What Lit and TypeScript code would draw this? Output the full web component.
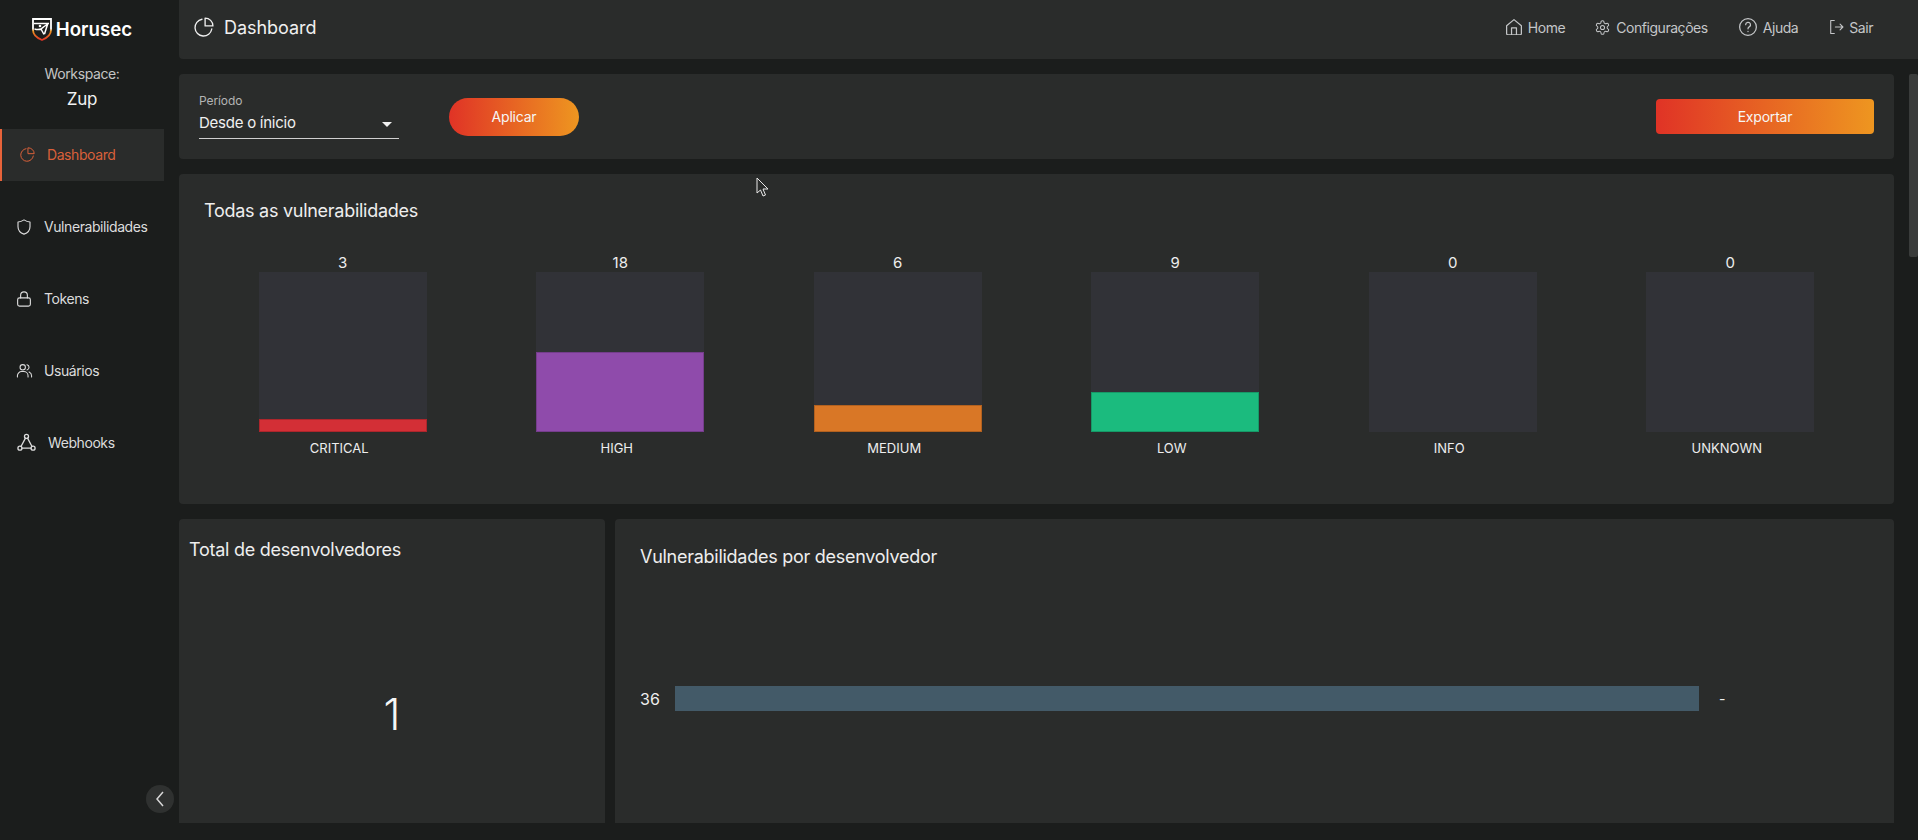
import { LitElement, html, css, svg } from 'lit';
import { customElement } from 'lit/decorators.js';

const icons = {
  pie: svg`<path d="M9.500 3.500A9.500 9.500 0 1 0 20.500 14.500"/><path d="M13 2.200A8.800 8.800 0 0 1 21.800 11H13z"/>`,
  shield: svg`<path d="M12 2.500c2.600 1.700 5.200 2.600 8 2.800v6.200c0 4.800-3.200 8.200-8 10-4.800-1.800-8-5.200-8-10V5.300c2.800-.2 5.400-1.100 8-2.800z"/>`,
  lock: svg`<rect x="3.500" y="10.500" width="17" height="11" rx="2.500"/><path d="M7.500 10.500V7a4.500 4.500 0 0 1 9 0v3.500"/>`,
  users: svg`<circle cx="9.500" cy="7.500" r="3.800"/><path d="M2 21v-1.500a6 6 0 0 1 6-6h3a6 6 0 0 1 6 6V21"/><path d="M15.500 3.800a3.800 3.800 0 0 1 0 7.400M18.500 14a6 6 0 0 1 3.500 5.500V21"/>`,
  webhook: svg`<circle cx="12" cy="5" r="2.300"/><circle cx="4.500" cy="18.500" r="2.300"/><circle cx="19.500" cy="18.500" r="2.300"/><path d="M10.800 7 5.700 16.500M13.200 7l5.100 9.500M6.800 18.500h10.400"/>`,
  home: svg`<path d="M3 10.500 12 3l9 7.500V20a1.500 1.500 0 0 1-1.500 1.500h-15A1.500 1.500 0 0 1 3 20z"/><path d="M9 21.500V13h6v8.500"/>`,
  gear: svg`<circle cx="12" cy="12" r="3"/><path d="M12.220 2h-.44a2 2 0 0 0-2 2v.18a2 2 0 0 1-1 1.730l-.43.25a2 2 0 0 1-2 0l-.15-.08a2 2 0 0 0-2.730.73l-.22.38a2 2 0 0 0 .73 2.730l.15.1a2 2 0 0 1 1 1.720v.51a2 2 0 0 1-1 1.740l-.15.09a2 2 0 0 0-.73 2.730l.22.38a2 2 0 0 0 2.730.73l.15-.08a2 2 0 0 1 2 0l.43.25a2 2 0 0 1 1 1.730V20a2 2 0 0 0 2 2h.44a2 2 0 0 0 2-2v-.18a2 2 0 0 1 1-1.730l.43-.25a2 2 0 0 1 2 0l.15.08a2 2 0 0 0 2.730-.73l.22-.39a2 2 0 0 0-.73-2.730l-.15-.08a2 2 0 0 1-1-1.740v-.5a2 2 0 0 1 1-1.740l.15-.09a2 2 0 0 0 .73-2.730l-.22-.38a2 2 0 0 0-2.730-.73l-.15.08a2 2 0 0 1-2 0l-.43-.25a2 2 0 0 1-1-1.730V4a2 2 0 0 0-2-2z"/>`,
  help: svg`<circle cx="12" cy="12" r="10"/><path d="M9.200 9.300a2.900 2.900 0 1 1 4.300 2.500c-1 .6-1.500 1.100-1.500 2.400"/><path d="M12 17.200v.3"/>`,
  exit: svg`<path d="M9 3H4v18h5"/><path d="M10.500 12H21M17 8l4 4-4 4"/>`,
};

type IconName = keyof typeof icons;

const icon = (name: IconName, size: number, box = '0 0 24 24') =>
  html`<svg class="icon" width=${size} height=${size} viewBox=${box}>${icons[name]}</svg>`;

const PIE_BOX = '0.500 1 22.500 22.500';

const severities = [
  { label: 'CRITICAL', value: 3, color: '#d32f36' },
  { label: 'HIGH', value: 18, color: '#8f4bab' },
  { label: 'MEDIUM', value: 6, color: '#d97726' },
  { label: 'LOW', value: 9, color: '#1bbb7e' },
  { label: 'INFO', value: 0, color: '#1bbb7e' },
  { label: 'UNKNOWN', value: 0, color: '#1bbb7e' },
];

const navItems: { label: string; icon: IconName; size: number; box?: string; active?: boolean; wide?: boolean }[] = [
  { label: 'Dashboard', icon: 'pie', size: 15, box: PIE_BOX, active: true },
  { label: 'Vulnerabilidades', icon: 'shield', size: 18 },
  { label: 'Tokens', icon: 'lock', size: 18 },
  { label: 'Usuários', icon: 'users', size: 17 },
  { label: 'Webhooks', icon: 'webhook', size: 21, wide: true },
];

@customElement('app-root')
export class AppRoot extends LitElement {
  static styles = css`
    :host {
      position: relative;
      display: flex;
      height: 840px;
      overflow: hidden;
      background: #1b1d1c;
      color: #f2f2f2;
      font-family: Inter, 'Liberation Sans', sans-serif;
    }

    .icon {
      flex: none;
      fill: none;
      stroke: currentColor;
      stroke-width: 1.5;
      stroke-linecap: round;
      stroke-linejoin: round;
    }

    .sidebar {
      position: relative;
      flex: none;
      width: 164px;
      box-sizing: border-box;
      padding-top: 17px;
    }

    .logo {
      display: flex;
      align-items: center;
      justify-content: center;
      gap: 4px;
      height: 24px;
      font-size: 18.7px;
      font-weight: 600;
      color: #fff;
    }

    .workspace {
      margin-top: 24px;
      text-align: center;
      font-size: 14px;
      letter-spacing: -0.4px;
      line-height: 17px;
      color: #c4c4c4;
    }

    .workspace-name {
      margin-top: 7px;
      text-align: center;
      font-size: 17px;
      letter-spacing: -0.3px;
      line-height: 20px;
      color: #f2f2f2;
    }

    nav {
      margin-top: 20px;
    }

    .nav-item {
      display: flex;
      align-items: center;
      gap: 10px;
      height: 52px;
      margin-bottom: 20px;
      box-sizing: border-box;
      padding: 0 0 1px 14px;
      font-size: 14px;
      letter-spacing: -0.42px;
      color: #dcdcdc;
    }

    .nav-slot {
      flex: none;
      width: 20px;
      display: flex;
      justify-content: center;
    }

    .nav-item.wide .nav-slot {
      width: 24px;
    }

    .nav-item.active {
      padding-left: 15px;
      border-left: 2px solid #e8633a;
      background: #2a2c2b;
      color: #d9603a;
    }

    .collapse {
      position: absolute;
      left: 146px;
      top: 785px;
      width: 28px;
      height: 28px;
      border-radius: 50%;
      background: #2f3130;
      color: #d8d8d8;
      display: flex;
      align-items: center;
      justify-content: center;
    }

    .main {
      flex: 1;
      min-width: 0;
      display: flex;
      flex-direction: column;
      padding-left: 15px;
    }

    header {
      flex: none;
      display: flex;
      align-items: center;
      height: 59px;
      box-sizing: border-box;
      padding: 0 45px 5px 15px;
      margin-bottom: 15px;
      background: #2a2c2b;
      border-radius: 0 0 0 4px;
    }

    .title {
      display: flex;
      align-items: center;
      gap: 10px;
      font-size: 18px;
      letter-spacing: -0.05px;
      color: #f0f0f0;
      margin-right: auto;
    }

    .top-link {
      display: flex;
      align-items: center;
      gap: 6px;
      font-size: 14px;
      letter-spacing: -0.45px;
      color: #c4c6c8;
      margin-left: 31px;
    }

    .top-link.gear {
      margin-left: 30px;
    }

    .top-link.exit {
      gap: 5px;
      margin-left: 32px;
    }

    .content {
      display: flex;
      gap: 15px;
    }

    .column {
      flex: 1;
      min-width: 0;
      display: flex;
      flex-direction: column;
      gap: 15px;
      height: 749px;
    }

    .scrollbar {
      flex: none;
      width: 9px;
      height: 183px;
      background: #3a3c3b;
      border-radius: 2px;
    }

    .card {
      background: #2a2c2b;
      border-radius: 4px;
    }

    .filters {
      flex: none;
      height: 85px;
      box-sizing: border-box;
      display: flex;
      align-items: center;
      padding: 0 20px;
    }

    .select {
      width: 200px;
      box-sizing: border-box;
      border-bottom: 1px solid #d0d0d0;
      height: 45px;
      color: #f0f0f0;
    }

    .select small {
      display: block;
      font-size: 12px;
      letter-spacing: -0.1px;
      line-height: 14px;
      color: #b4b4b4;
    }

    .select-value {
      display: flex;
      align-items: center;
      justify-content: space-between;
      font-size: 15px;
      letter-spacing: -0.25px;
      line-height: 24px;
      margin-top: 3px;
      padding-right: 7px;
    }

    .caret {
      width: 0;
      height: 0;
      border-left: 5px solid transparent;
      border-right: 5px solid transparent;
      border-top: 5px solid #f0f0f0;
      margin-top: 3px;
    }

    .btn {
      display: flex;
      align-items: center;
      justify-content: center;
      font-size: 14px;
      letter-spacing: -0.2px;
      color: #f6f6f6;
      background: linear-gradient(90deg, #e03326, #ee9620);
    }

    .apply {
      width: 130px;
      height: 38px;
      margin-left: 50px;
      border-radius: 19px;
    }

    .export {
      width: 218px;
      height: 35px;
      margin-left: auto;
      border-radius: 4px;
    }

    .vulns {
      flex: none;
      height: 330px;
      box-sizing: border-box;
      padding: 25px 25px 0;
    }

    h2 {
      margin: 0;
      font-size: 18px;
      font-weight: 400;
      letter-spacing: -0.27px;
      line-height: 24px;
      color: #eeeeee;
    }

    .bars {
      display: grid;
      grid-template-columns: repeat(6, 1fr);
      margin-top: 36px;
    }

    .bar-col {
      display: flex;
      flex-direction: column;
      align-items: center;
      color: #eeeeee;
    }

    .bar-value {
      font-size: 15px;
      line-height: 18px;
      height: 18px;
      margin-top: -5px;
    }

    .track {
      width: 168px;
      height: 160px;
      background: #313237;
      display: flex;
      align-items: flex-end;
    }

    .fill {
      width: 100%;
      box-sizing: border-box;
      border: 1px solid rgba(0, 0, 0, 0.18);
    }

    .fill.empty {
      display: none;
    }

    .bar-label {
      margin-top: 7px;
      margin-right: 7px;
      line-height: 18px;
      font-size: 13px;
    }

    .row {
      flex: 1;
      min-height: 0;
      display: flex;
      gap: 10px;
    }

    .row .card {
      border-radius: 4px 4px 0 0;
      box-sizing: border-box;
    }

    .total {
      flex: none;
      width: 426px;
      padding: 19px 10px 0;
      display: flex;
      flex-direction: column;
    }

    .total-value {
      margin-top: 127px;
      text-align: center;
      font-size: 43px;
      line-height: 50px;
      font-weight: 300;
      color: #f6f6f6;
    }

    .devs {
      flex: 1;
      min-width: 0;
      padding: 26px 25px 0;
    }

    .dev-row {
      display: flex;
      align-items: center;
      margin-top: 117px;
      height: 25px;
      font-size: 16px;
      color: #eeeeee;
    }

    .dev-count {
      width: 35px;
    }

    .dev-bar {
      width: 1024px;
      height: 25px;
      background: #435a68;
    }

    .dev-name {
      margin-left: 20px;
      font-size: 14px;
    }

    .cursor {
      position: absolute;
      left: 756px;
      top: 177px;
    }
  `;

  render() {
    return html`
      <aside class="sidebar">
        <div class="logo">
          <svg width="20" height="23" viewBox="0 0 20 23" fill="none">
            <defs>
              <linearGradient id="shield" x1="0" y1="0" x2="0" y2="1">
                <stop offset="0.45" stop-color="#ffffff"/>
                <stop offset="0.58" stop-color="#ee9620"/>
                <stop offset="1" stop-color="#e03326"/>
              </linearGradient>
            </defs>
            <path d="M1 1h18v11c0 5-4 8-9 10-5-2-9-5-9-10z" stroke="url(#shield)" stroke-width="1.800"/>
            <path d="M2 5.500h15M2.500 11c3.500 1 7 .5 9-2l5-3.500M9 11l3 5.500M15.500 6.500 12.500 16" stroke="#fff" stroke-width="1.500"/>
            <circle cx="8" cy="8" r="1.300" fill="#fff"/>
          </svg>
          <span>Horusec</span>
        </div>
        <div class="workspace">Workspace:</div>
        <div class="workspace-name">Zup</div>
        <nav>
          ${navItems.map(
            (item) => html`
              <div class="nav-item ${item.active ? 'active' : ''} ${item.wide ? 'wide' : ''}">
                <span class="nav-slot">${icon(item.icon, item.size, item.box)}</span>
                <span>${item.label}</span>
              </div>
            `
          )}
        </nav>
        <div class="collapse">
          <svg width="12" height="18" viewBox="0 0 12 18" fill="none" stroke="currentColor" stroke-width="1.500">
            <path d="M9 2 3 9l6 7"/>
          </svg>
        </div>
      </aside>
      <div class="main">
        <header>
          <div class="title">${icon('pie', 20, PIE_BOX)}<span>Dashboard</span></div>
          <div class="top-link">${icon('home', 16, '2.250 2.250 19.500 19.500')}<span>Home</span></div>
          <div class="top-link gear">${icon('gear', 15, '1 1 22 22')}<span>Configurações</span></div>
          <div class="top-link">${icon('help', 18, '1.250 1.250 21.500 21.500')}<span>Ajuda</span></div>
          <div class="top-link exit">${icon('exit', 14, '3.250 2.250 19 19.500')}<span>Sair</span></div>
        </header>
        <div class="content">
          <div class="column">
            <section class="card filters">
              <div class="select">
                <small>Período</small>
                <div class="select-value"><span>Desde o ínicio</span><i class="caret"></i></div>
              </div>
              <div class="btn apply">Aplicar</div>
              <div class="btn export">Exportar</div>
            </section>
            <section class="card vulns">
              <h2>Todas as vulnerabilidades</h2>
              <div class="bars">
                ${severities.map(
                  (s) => html`
                    <div class="bar-col">
                      <div class="bar-value">${s.value}</div>
                      <div class="track">
                        <div
                          class="fill ${s.value ? '' : 'empty'}"
                          style="height:${(s.value / 36) * 160}px;background:${s.color}"
                        ></div>
                      </div>
                      <div class="bar-label">${s.label}</div>
                    </div>
                  `
                )}
              </div>
            </section>
            <div class="row">
              <section class="card total">
                <h2>Total de desenvolvedores</h2>
                <div class="total-value">1</div>
              </section>
              <section class="card devs">
                <h2>Vulnerabilidades por desenvolvedor</h2>
                <div class="dev-row">
                  <span class="dev-count">36</span>
                  <div class="dev-bar"></div>
                  <span class="dev-name">-</span>
                </div>
              </section>
            </div>
          </div>
          <div class="scrollbar"></div>
        </div>
      </div>
      <svg class="cursor" width="13" height="20" viewBox="0 0 13 20">
        <path d="M1 1v15l3.500-3 2.500 6 2.500-1-2.500-6H12z" fill="#2a2c2b" stroke="#e8e8e8" stroke-width="1"/>
      </svg>
    `;
  }
}
